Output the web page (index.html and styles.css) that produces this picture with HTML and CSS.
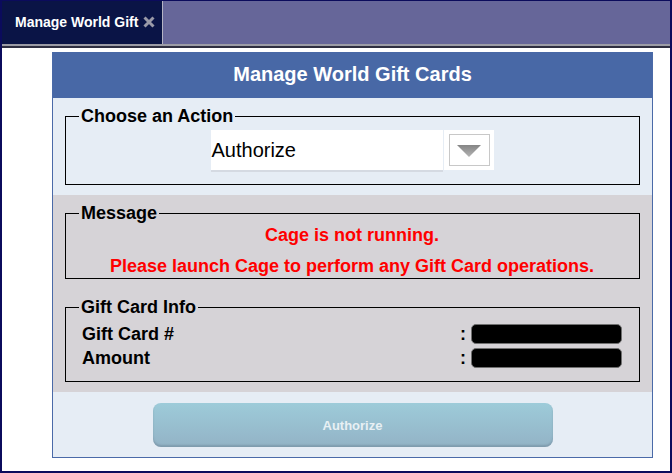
FILE: index.html
```html
<!DOCTYPE html>
<html>
<head>
<meta charset="utf-8">
<title>Manage World Gift</title>
<link rel="stylesheet" href="styles.css">
</head>
<body>
<div class="window">
  <div class="tabbar">
    <div class="tab">
      <span class="tab-title">Manage World Gift</span>
      <svg class="tab-close" width="12" height="12" viewBox="0 0 12 12"><path d="M1.5 1.5 L10.5 10.5 M10.5 1.5 L1.5 10.5" stroke="#9a9aa8" stroke-width="3" fill="none"/></svg>
    </div>
  </div>
  <div class="rule"></div>
  <div class="content">
    <div class="panel">
      <div class="panel-header">Manage World Gift Cards</div>
      <div class="section section-light">
        <fieldset class="group group-action">
          <legend>Choose an Action</legend>
          <div class="picker">
            <div class="picker-value">Authorize</div>
            <div class="picker-button">
              <div class="picker-arrow-box">
                <svg width="24" height="12" viewBox="0 0 24 12">
                  <defs>
                    <linearGradient id="tri" x1="0" y1="0" x2="0" y2="1">
                      <stop offset="0" stop-color="#858585"/>
                      <stop offset="1" stop-color="#b4b4b4"/>
                    </linearGradient>
                  </defs>
                  <polygon points="0,0 24,0 12,12" fill="url(#tri)"/>
                </svg>
              </div>
            </div>
          </div>
        </fieldset>
      </div>
      <div class="section section-gray">
        <fieldset class="group group-message">
          <legend>Message</legend>
          <div class="msg">Cage is not running.</div>
          <div class="msg msg-second">Please launch Cage to perform any Gift Card operations.</div>
        </fieldset>
        <fieldset class="group group-info">
          <legend>Gift Card Info</legend>
          <div class="info-row">
            <span class="info-label">Gift Card #</span>
            <span class="info-colon">:</span>
            <span class="info-field"></span>
          </div>
          <div class="info-row">
            <span class="info-label">Amount</span>
            <span class="info-colon">:</span>
            <span class="info-field"></span>
          </div>
        </fieldset>
      </div>
      <div class="section section-footer">
        <div class="authorize-btn">Authorize</div>
      </div>
    </div>
  </div>
</div>
</body>
</html>
```

FILE: styles.css
```css
* { box-sizing: border-box; }
html, body {
  margin: 0;
  padding: 0;
  background: #ffffff;
}
body {
  font-family: "Liberation Sans", Arial, sans-serif;
}
.window {
  width: 672px;
  height: 473px;
  border: 2px solid #0b0b5c;
  border-top-width: 1px;
  background: #ffffff;
  display: flex;
  flex-direction: column;
  overflow: hidden;
}
.tabbar {
  height: 43px;
  background: #666699;
  display: flex;
  flex-shrink: 0;
}
.tab {
  width: 161px;
  height: 43px;
  background: #0a1446;
  border-right: 1px solid #b4b4c4;
  display: flex;
  align-items: center;
  padding-left: 13px;
  padding-bottom: 2px;
}
.tab-title {
  color: #ffffff;
  font-weight: bold;
  font-size: 14px;
}
.tab-close {
  margin-left: 5px;
  margin-top: 1px;
}
.rule {
  height: 4px;
  border-top: 2px solid #9c9ca6;
  border-bottom: 2px solid #2e2e40;
  flex-shrink: 0;
}
.content {
  flex: 1;
  padding: 4px 0 0 50px;
}
.panel {
  width: 601px;
  border: 1px solid #4a6aa8;
  border-top: 0;
}
.panel-header {
  height: 46px;
  background: #4868a6;
  color: #ffffff;
  font-weight: bold;
  font-size: 20px;
  display: flex;
  align-items: center;
  justify-content: center;
  padding-bottom: 1px;
}
.section {
  padding: 8px 12px 10px 12px;
}
.section-light {
  background: #e6edf5;
  height: 97px;
}
.section-gray {
  background: #d6d3d7;
  height: 197px;
}
.section-footer {
  background: #e6edf5;
  height: 65px;
  padding: 11px 0 10px 0;
  display: flex;
  justify-content: center;
}
.group {
  margin: 0;
  min-width: 0;
  border: 1px solid #000000;
  padding: 0 14px 0 13px;
}
.group legend {
  padding: 0 2px;
  font-weight: bold;
  font-size: 18px;
  line-height: 20px;
  color: #000000;
}
.group-action {
  padding-top: 4px;
  padding-bottom: 12px;
}
.picker {
  display: flex;
  justify-content: center;
  align-items: flex-start;
  gap: 1px;
}
.picker-value {
  width: 232px;
  height: 42px;
  background: #ffffff;
  border-bottom: 2px solid #d5dae2;
  font-size: 20px;
  line-height: 40px;
  padding-left: 1px;
  color: #000000;
}
.picker-button {
  width: 50px;
  height: 40px;
  background: #ffffff;
  padding: 4px 0 0 5px;
}
.picker-arrow-box {
  width: 41px;
  height: 32px;
  border: 1px solid #c8c8c8;
  display: flex;
  align-items: center;
  justify-content: center;
  padding-top: 2px;
}
.group-message {
  padding-top: 2px;
  padding-bottom: 2px;
}
.msg {
  color: #ff0000;
  font-weight: bold;
  font-size: 18px;
  line-height: 20px;
  text-align: center;
}
.msg-second {
  margin-top: 11px;
}
.group-info {
  margin-top: 18px;
  padding-top: 7px;
  padding-bottom: 13px;
  padding-right: 17px;
}
.info-row {
  display: grid;
  grid-template-columns: 1fr auto 151px;
  align-items: center;
  height: 20px;
  padding-left: 3px;
}
.info-row + .info-row {
  margin-top: 4px;
}
.info-label,
.info-colon {
  font-weight: bold;
  font-size: 18px;
  line-height: 20px;
  color: #000000;
}
.info-colon {
  margin-right: 5px;
}
.info-field {
  height: 20px;
  background: #000000;
  border: 1px solid #707070;
  border-radius: 5px;
}
.authorize-btn {
  width: 400px;
  height: 44px;
  border-radius: 8px;
  background: linear-gradient(#9dcbd9, #93b3c6);
  box-shadow: inset 0 -2px 2px rgba(90, 110, 125, 0.35);
  color: #e8f0f4;
  font-weight: bold;
  font-size: 13px;
  display: flex;
  align-items: center;
  justify-content: center;
}
```
